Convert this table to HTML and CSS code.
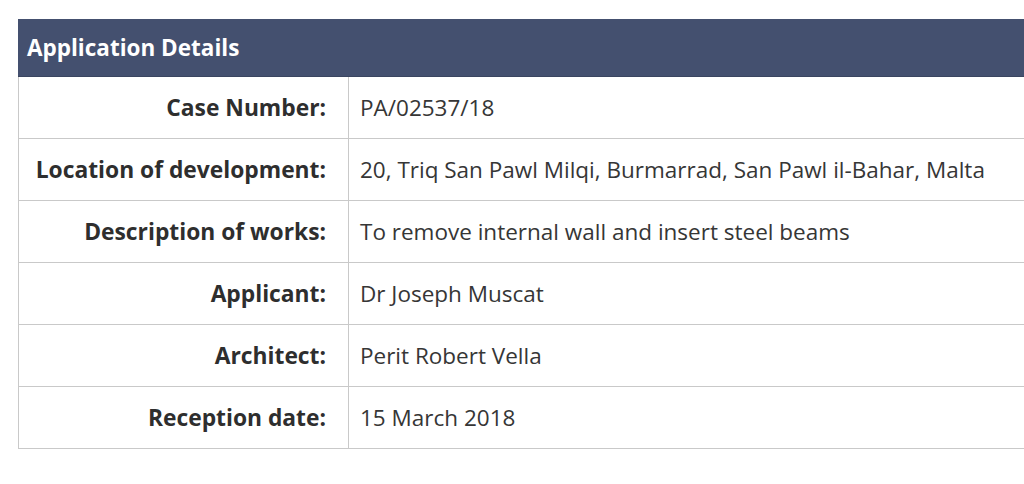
FILE: index.html
```html
<!DOCTYPE html>
<html>
<head>
<meta charset="utf-8">
<link rel="stylesheet" href="styles.css">
</head>
<body>
<div class="panel">
  <div class="panel-head">Application Details</div>
  <table class="details">
    <tr><th>Case Number:</th><td>PA/02537/18</td></tr>
    <tr><th>Location of development:</th><td>20, Triq San Pawl Milqi, Burmarrad, San Pawl il-Bahar, Malta</td></tr>
    <tr><th>Description of works:</th><td>To remove internal wall and insert steel beams</td></tr>
    <tr><th>Applicant:</th><td>Dr Joseph Muscat</td></tr>
    <tr><th>Architect:</th><td>Perit Robert Vella</td></tr>
    <tr><th>Reception date:</th><td>15 March 2018</td></tr>
  </table>
</div>
</body>
</html>
```
FILE: styles.css
```css
html, body {
  margin: 0;
  padding: 0;
  background: #fff;
  overflow: hidden;
}
body {
  font-family: "Open Sans", "Liberation Sans", sans-serif;
  color: #333;
}
.panel {
  margin: 19px 0 0 18px;
  width: 1040px;
}
.panel-head {
  background: #44506f;
  color: #fff;
  font-weight: 700;
  font-size: 22.5px;
  height: 58px;
  line-height: 58px;
  padding-left: 9px;
  border-bottom: 1px solid #3a4560;
  box-sizing: border-box;
}
.details {
  width: 100%;
  border-collapse: collapse;
  font-size: 22.5px;
}
.details th,
.details td {
  border: 1px solid #c9c9c9;
  height: 62px;
  padding: 0;
  box-sizing: border-box;
}
.details tr:first-child th,
.details tr:first-child td {
  border-top: none;
  height: 61px;
}
.details th {
  width: 330px;
  text-align: right;
  padding-right: 22px;
  font-weight: 700;
  font-size: 22.8px;
  color: #2e2e2e;
}
.details td {
  text-align: left;
  padding-left: 11px;
  color: #363636;
}
```
